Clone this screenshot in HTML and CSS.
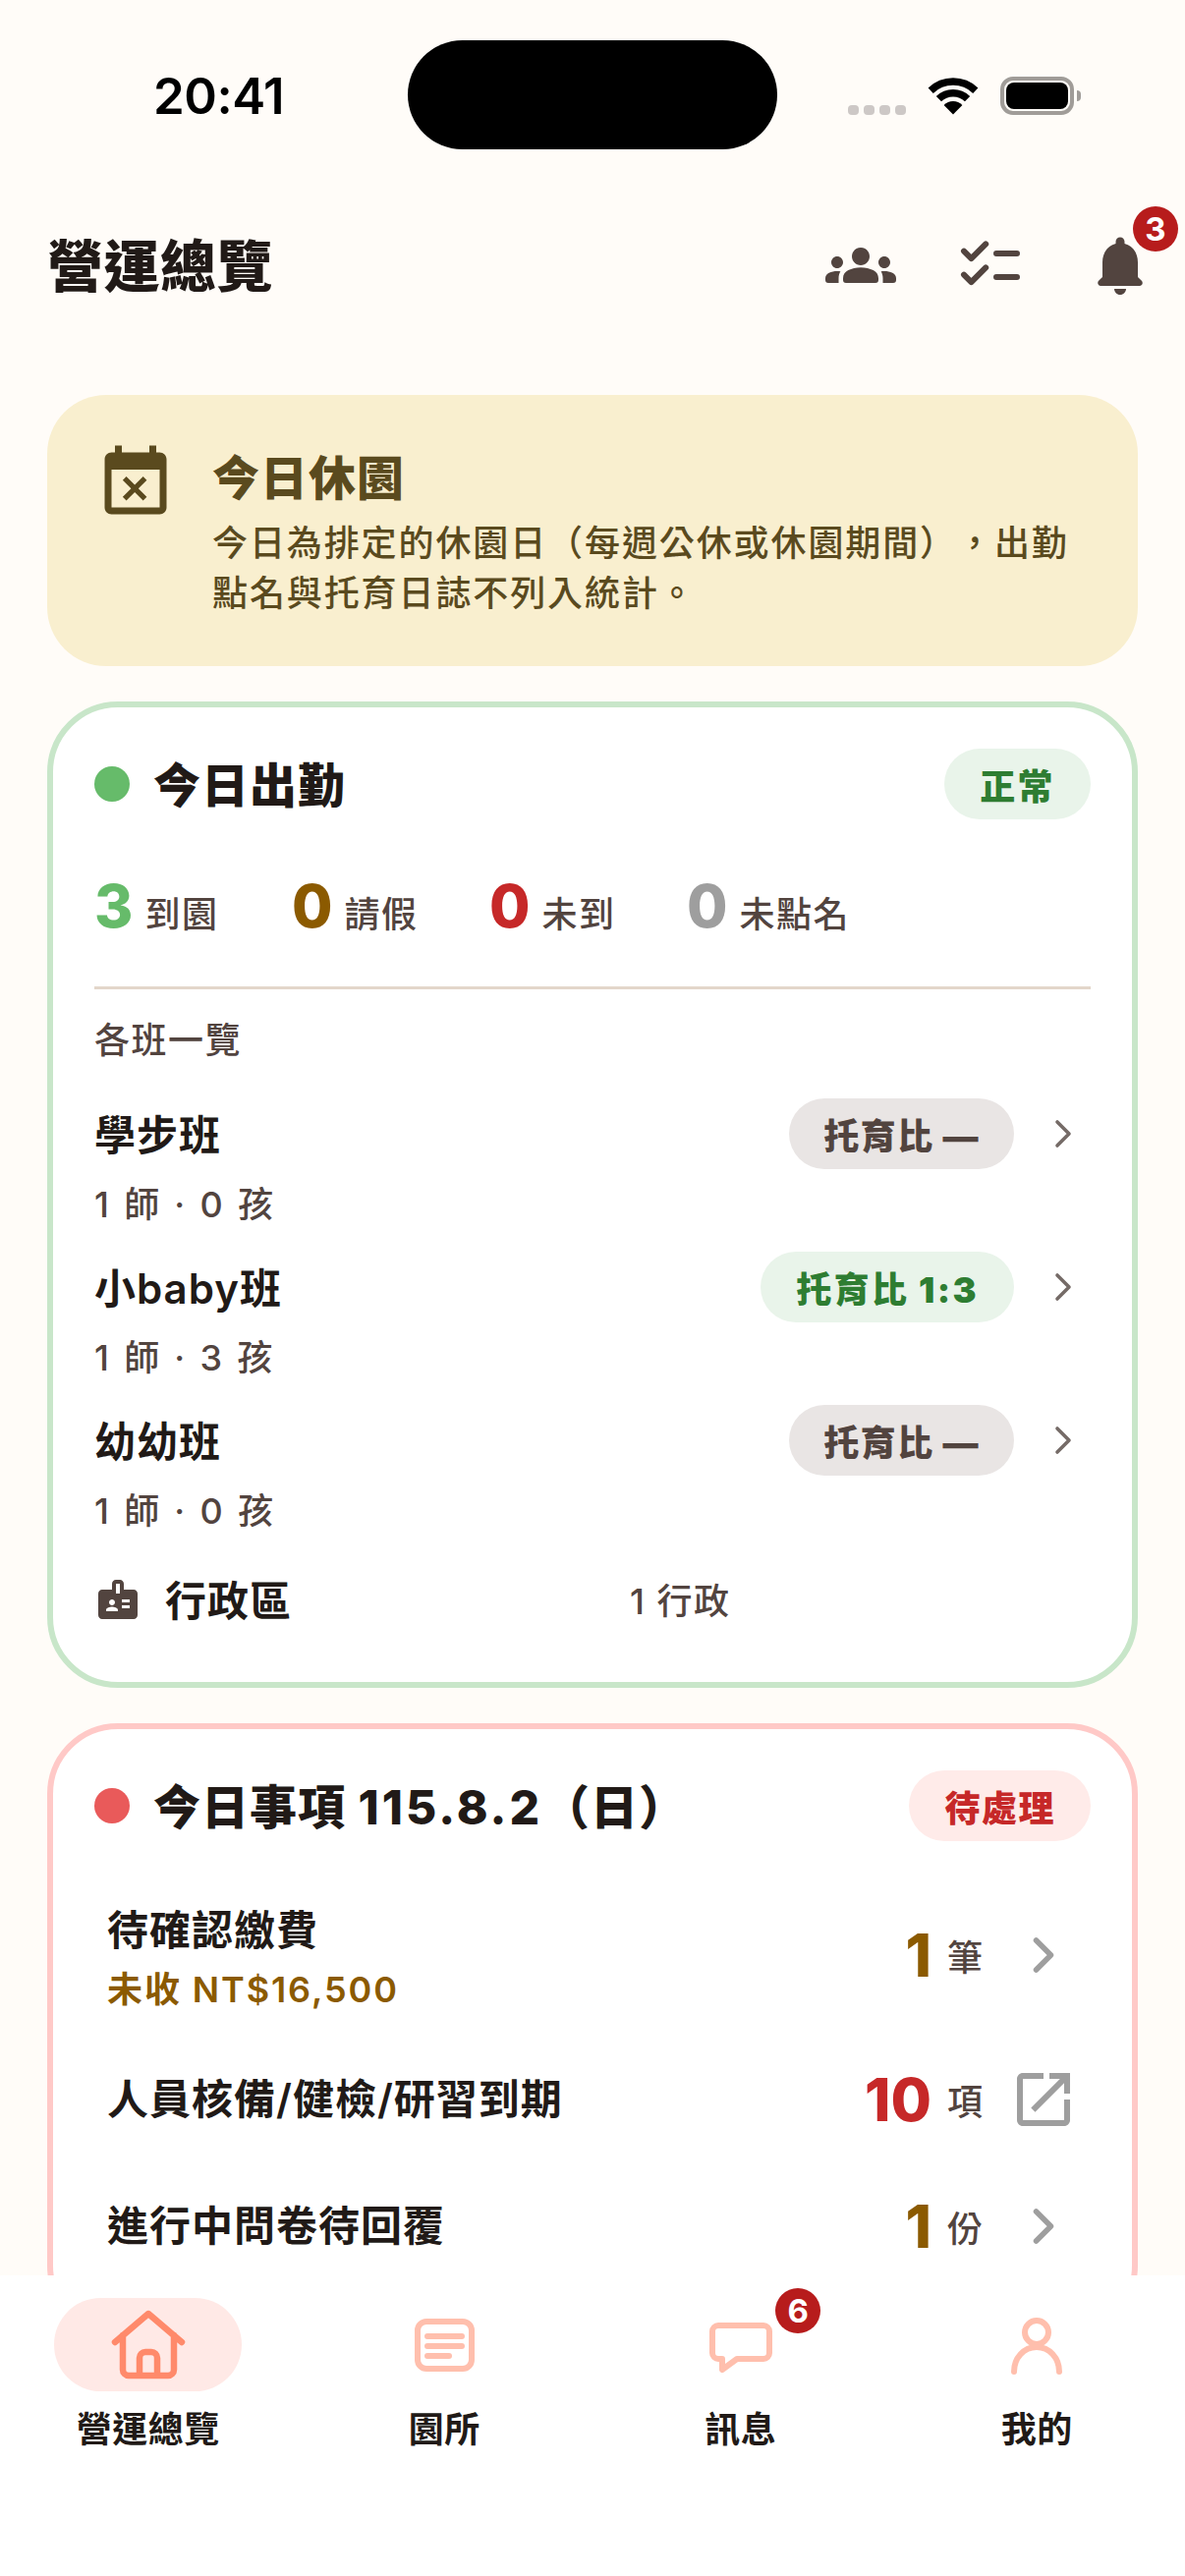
FILE: index.html
```html
<!DOCTYPE html>
<html lang="zh-Hant">

<head>
    <meta charset="UTF-8">
    <meta name="viewport" content="width=device-width, initial-scale=1.0">
    <title>營運總覽</title>
    <link rel="stylesheet" href="styles.css">
</head>

<body>
    <div class="page">
        <!-- 狀態列 -->
        <div class="status-bar">
            <span class="time">20:41</span>
            <div class="island"></div>
            <div class="status-right">
                <div class="signal"><i></i><i></i><i></i><i></i></div>
                <svg class="wifi" width="52" height="38" viewBox="0 0 52 38">
                    <path d="M3.2 13.2a33 33 0 0 1 45.6 0M11.4 21.6a21 21 0 0 1 29.2 0" fill="none" stroke="#000" stroke-width="7.5"/>
                    <path d="M26 37.5l-9.4-9.6a13.5 13.5 0 0 1 18.8 0z" fill="#000"/>
                </svg>
                <div class="battery"><div class="battery-fill"></div></div>
                <div class="battery-nub"></div>
            </div>
        </div>

        <!-- 標題列 -->
        <header class="top-bar">
            <h1>營運總覽</h1>
            <div class="top-icons">
                <svg class="top-icon" viewBox="0 0 24 24"><path d="M12 12.75c1.63 0 3.07.39 4.24.9 1.08.48 1.76 1.56 1.76 2.73V17a1 1 0 0 1-1 1H7a1 1 0 0 1-1-1v-.61c0-1.18.68-2.26 1.76-2.73 1.17-.52 2.61-.91 4.24-.91zM4 13c1.1 0 2-.9 2-2s-.9-2-2-2-2 .9-2 2 .9 2 2 2zm1.13 1.1C4.76 14.04 4.39 14 4 14c-.99 0-1.93.21-2.78.58C.48 14.9 0 15.62 0 16.43V17a1 1 0 0 0 1 1h3.5v-1.61c0-.83.23-1.61.63-2.29zM20 13c1.1 0 2-.9 2-2s-.9-2-2-2-2 .9-2 2 .9 2 2 2zm4 3.43c0-.81-.48-1.53-1.22-1.85-.85-.37-1.79-.58-2.78-.58-.39 0-.76.04-1.13.1.4.68.63 1.46.63 2.29V18H23a1 1 0 0 0 1-1v-.57zM12 6c1.66 0 3 1.34 3 3s-1.34 3-3 3-3-1.34-3-3 1.34-3 3-3z"/></svg>
                <svg class="top-icon" viewBox="0 0 24 24"><path class="check-line" d="M3 7.2l2.5 2.5 4.9-4.9M3 15.2l2.5 2.5 4.9-4.9M14 8h7M14 16h7"/></svg>
                <div class="bell-wrap">
                    <svg class="top-icon" viewBox="0 0 24 24"><path d="M12 22c1.1 0 2-.9 2-2h-4c0 1.1.9 2 2 2zm6-6v-5c0-3.07-1.63-5.64-4.5-6.32V4c0-.83-.67-1.5-1.5-1.5s-1.5.67-1.5 1.5v.68C7.64 5.36 6 7.92 6 11v5l-1.29 1.29c-.63.63-.19 1.71.7 1.71h13.17c.89 0 1.34-1.08.71-1.71L18 16z"/></svg>
                    <span class="badge bell-badge">3</span>
                </div>
            </div>
        </header>

        <main class="content">
            <!-- 休園提示 -->
            <section class="closed-banner">
                <svg class="closed-icon" viewBox="0 0 24 24"><path d="M9.31 17l2.44-2.44L14.19 17l1.06-1.06-2.44-2.44 2.44-2.44L14.19 10l-2.44 2.44L9.31 10l-1.06 1.06 2.44 2.44-2.44 2.44L9.31 17zM19 3h-1V1h-2v2H8V1H6v2H5c-1.11 0-1.99.9-1.99 2L3 19c0 1.1.89 2 2 2h14c1.1 0 2-.9 2-2V5c0-1.1-.9-2-2-2zm0 16H5V8h14v11z"/></svg>
                <div class="closed-text">
                    <h2>今日休園</h2>
                    <p>今日為排定的休園日（每週公休或休園期間），出勤點名與托育日誌不列入統計。</p>
                </div>
            </section>

            <!-- 今日出勤 -->
            <section class="card card-green">
                <div class="card-head">
                    <span class="dot dot-green"></span>
                    <h2>今日出勤</h2>
                    <span class="pill pill-green">正常</span>
                </div>
                <div class="stats">
                    <div class="stat"><b class="num green">3</b><span>到園</span></div>
                    <div class="stat"><b class="num amber">0</b><span>請假</span></div>
                    <div class="stat"><b class="num red">0</b><span>未到</span></div>
                    <div class="stat"><b class="num grey">0</b><span>未點名</span></div>
                </div>
                <div class="divider"></div>
                <div class="list-title">各班一覽</div>

                <div class="class-row">
                    <div class="class-top">
                        <span class="class-name">學步班</span>
                        <span class="pill pill-grey">托育比 —</span>
                        <svg class="chev" viewBox="0 0 24 24"><path d="M9 6l6 6-6 6"/></svg>
                    </div>
                    <div class="class-sub">1 師 · 0 孩</div>
                </div>
                <div class="class-row">
                    <div class="class-top">
                        <span class="class-name">小baby班</span>
                        <span class="pill pill-green">托育比 1:3</span>
                        <svg class="chev" viewBox="0 0 24 24"><path d="M9 6l6 6-6 6"/></svg>
                    </div>
                    <div class="class-sub">1 師 · 3 孩</div>
                </div>
                <div class="class-row">
                    <div class="class-top">
                        <span class="class-name">幼幼班</span>
                        <span class="pill pill-grey">托育比 —</span>
                        <svg class="chev" viewBox="0 0 24 24"><path d="M9 6l6 6-6 6"/></svg>
                    </div>
                    <div class="class-sub">1 師 · 0 孩</div>
                </div>

                <div class="admin-row">
                    <svg class="admin-icon" viewBox="0 0 24 24"><path d="M20 7h-5V4c0-1.1-.9-2-2-2h-2c-1.1 0-2 .9-2 2v3H4c-1.1 0-2 .9-2 2v11c0 1.1.9 2 2 2h16c1.1 0 2-.9 2-2V9c0-1.1-.9-2-2-2zM9 12c.83 0 1.5.67 1.5 1.5S9.83 15 9 15s-1.5-.67-1.5-1.5S8.17 12 9 12zm3 6H6v-.75c0-1 2-1.5 3-1.5s3 .5 3 1.5V18zm1-9h-2V4h2v5zm5 7.5h-4V15h4v1.5zm0-3h-4V12h4v1.5z"/></svg>
                    <span class="class-name">行政區</span>
                    <span class="admin-count">1 行政</span>
                </div>
            </section>

            <!-- 今日事項 -->
            <section class="card card-red">
                <div class="card-head">
                    <span class="dot dot-red"></span>
                    <h2>今日事項 <span class="date">115.8.2</span>（日）</h2>
                    <span class="pill pill-red">待處理</span>
                </div>
                <div class="todo-row todo-first">
                    <div class="todo-text">
                        <div class="todo-name">待確認繳費</div>
                        <div class="todo-note">未收 NT$16,500</div>
                    </div>
                    <div class="todo-count"><b class="num amber">1</b><span>筆</span></div>
                    <div class="todo-go"><svg class="chev-big" viewBox="0 0 24 24"><path d="M9 6l6 6-6 6"/></svg></div>
                </div>
                <div class="todo-row">
                    <div class="todo-text">
                        <div class="todo-name">人員核備/健檢/研習到期</div>
                    </div>
                    <div class="todo-count"><b class="num red">10</b><span>項</span></div>
                    <div class="todo-go"><svg class="open-icon" viewBox="0 0 24 24"><path d="M19 19H5V5h7V3H5c-1.11 0-2 .9-2 2v14c0 1.1.89 2 2 2h14c1.1 0 2-.9 2-2v-7h-2v7zM14 3v2h3.59l-9.83 9.83 1.41 1.41L19 6.41V10h2V3h-7z"/></svg></div>
                </div>
                <div class="todo-row">
                    <div class="todo-text">
                        <div class="todo-name">進行中問卷待回覆</div>
                    </div>
                    <div class="todo-count"><b class="num amber">1</b><span>份</span></div>
                    <div class="todo-go"><svg class="chev-big" viewBox="0 0 24 24"><path d="M9 6l6 6-6 6"/></svg></div>
                </div>
            </section>
        </main>

        <!-- 底部導覽 -->
        <nav class="tab-bar">
            <div class="tab">
                <div class="tab-icon tab-active">
                    <svg class="nav-svg nav-home" width="78" height="78" viewBox="0 0 78 78">
                        <path d="M5 36L39 7l34 29M13 29v35a6 6 0 0 0 6 6h40a6 6 0 0 0 6-6V29M30 70V52a6 6 0 0 1 6-6h6a6 6 0 0 1 6 6v18"/>
                    </svg>
                </div>
                <span class="tab-label">營運總覽</span>
            </div>
            <div class="tab">
                <div class="tab-icon">
                    <svg class="nav-svg" width="72" height="72" viewBox="0 0 72 72">
                        <rect x="9" y="12" width="55" height="48" rx="9"/>
                        <path d="M19 27h35M19 37h35M19 47h22"/>
                    </svg>
                </div>
                <span class="tab-label">園所</span>
            </div>
            <div class="tab">
                <div class="tab-icon">
                    <svg class="nav-svg" width="72" height="72" viewBox="0 0 72 72">
                        <path d="M13 16h46a6 6 0 0 1 6 6v22a6 6 0 0 1-6 6H32L17 61V50h-4a6 6 0 0 1-6-6V22a6 6 0 0 1 6-6z"/>
                    </svg>
                    <span class="badge chat-badge">6</span>
                </div>
                <span class="tab-label">訊息</span>
            </div>
            <div class="tab">
                <div class="tab-icon">
                    <svg class="nav-svg" width="72" height="72" viewBox="0 0 72 72">
                        <circle cx="36" cy="23" r="12"/>
                        <path d="M13 63c0-14 10-25 23-25s23 11 23 25"/>
                    </svg>
                </div>
                <span class="tab-label">我的</span>
            </div>
        </nav>
    </div>
</body>

</html>
```

FILE: styles.css
```css
/* 基本樣式設定 */
* {
    box-sizing: border-box;
}

body {
    margin: 0;
    background: #fffcf8;
    font-family: Inter, "Noto Sans CJK TC", sans-serif;
    color: #211a17;
    text-spacing-trim: space-all;
}

h1, h2, p {
    margin: 0;
}

.page {
    position: relative;
    width: 1206px;
    height: 2622px;
    display: flex;
    flex-direction: column;
    overflow: hidden;
}

/* 狀態列 */
.status-bar {
    height: 198px;
    flex: none;
    display: flex;
    justify-content: space-between;
    padding: 74px 106px 0 156px;
}

.time {
    font-size: 51px;
    line-height: 48px;
    font-weight: 600;
    color: #000;
    letter-spacing: -0.5px;
}

.island {
    position: absolute;
    left: 415px;
    top: 41px;
    width: 376px;
    height: 111px;
    border-radius: 56px;
    background: #000;
}

.status-right {
    display: flex;
    align-items: flex-end;
    height: 43px;
}

.signal {
    display: flex;
    gap: 5px;
    margin-right: 22px;
}

.signal i {
    width: 11px;
    height: 10px;
    border-radius: 4px;
    background: #cdc8c6;
}

.wifi {
    margin-right: 22px;
}

.battery {
    width: 75px;
    height: 39px;
    border: 4px solid #a09c98;
    border-radius: 13px;
    padding: 2px;
}

.battery-fill {
    height: 100%;
    border-radius: 8px;
    background: #000;
}

.battery-nub {
    width: 4px;
    height: 11px;
    margin: 0 0 14px 3px;
    border-radius: 0 4px 4px 0;
    background: #a09c98;
}

/* 標題列 */
.top-bar {
    height: 144px;
    flex: none;
    display: flex;
    align-items: center;
    justify-content: space-between;
    padding: 0 30px 0 48px;
}

.top-bar h1 {
    padding-bottom: 6px;
    font-size: 57px;
    font-weight: 900;
    letter-spacing: 0.5px;
}

.top-icons {
    display: flex;
    gap: 60px;
}

.top-icon {
    display: block;
    width: 72px;
    height: 72px;
    fill: #52443f;
}

.check-line {
    fill: none;
    stroke: #52443f;
    stroke-width: 2;
    stroke-linecap: round;
    stroke-linejoin: round;
}

.bell-wrap {
    position: relative;
}

.badge {
    position: absolute;
    width: 46px;
    height: 46px;
    border-radius: 50%;
    background: #b71c1c;
    color: #fff;
    font-size: 33px;
    font-weight: 700;
    line-height: 46px;
    text-align: center;
}

.bell-badge {
    left: 49px;
    top: -24px;
}

.chat-badge {
    left: 131px;
    top: -10px;
}

/* 內容區 */
.content {
    flex: 1;
    min-height: 0;
    overflow: hidden;
    padding: 60px 48px 0;
}

.closed-banner {
    height: 276px;
    display: flex;
    gap: 36px;
    padding: 48px;
    border-radius: 60px;
    background: #f9efcf;
    color: #5a4a1e;
}

.closed-icon {
    flex: none;
    width: 84px;
    height: 84px;
    fill: #5a4a1e;
}

.closed-text h2 {
    padding-top: 2px;
    font-size: 48px;
    line-height: 70px;
    font-weight: 900;
    letter-spacing: 1px;
}

.closed-text p {
    margin-top: 6px;
    font-size: 36px;
    line-height: 51px;
    font-weight: 500;
    letter-spacing: 1.9px;
}

.card {
    margin-top: 36px;
    padding: 42px 42px 42px;
    border: 6px solid;
    border-radius: 72px;
    background: #fff;
}

.card-green {
    height: 1004px;
    border-color: #c8e6c9;
}

.card-red {
    border-color: #ffc9c7;
}

.card-head {
    display: flex;
    align-items: center;
    height: 72px;
}

.card-head h2 {
    flex: 1;
    padding-bottom: 4px;
    font-size: 48px;
    font-weight: 900;
    letter-spacing: 1px;
}

.date {
    margin-left: 2px;
    font-weight: 800;
    letter-spacing: 3px;
}

.dot {
    width: 36px;
    height: 36px;
    margin-right: 24px;
    border-radius: 50%;
}

.dot-green {
    background: #66bb6a;
}

.dot-red {
    background: #e95a5a;
}

.pill {
    height: 72px;
    display: flex;
    align-items: center;
    padding: 0 36px;
    border-radius: 36px;
    font-size: 36px;
    font-weight: 900;
    letter-spacing: 1.5px;
}

.pill-green {
    background: #e9f4ea;
    color: #2e7d32;
    letter-spacing: 2.4px;
}

.pill-red {
    background: #ffebe9;
    color: #c62828;
}

.pill-grey {
    padding: 0 35px;
    background: #e9e5e4;
    color: #52443f;
}

/* 出勤統計 */
.stats {
    display: grid;
    grid-template-columns: repeat(4, 201px);
    margin-top: 52px;
}

.stat {
    display: flex;
    align-items: baseline;
    font-size: 36px;
    font-weight: 500;
    letter-spacing: 1.5px;
    color: #52443f;
}

.stat span {
    margin-left: 12px;
}

.num {
    font-size: 60px;
    line-height: 72px;
    font-weight: 800;
    letter-spacing: 0;
}

.green {
    color: #66bb6a;
}

.amber {
    color: #8b5a00;
}

.red {
    color: #c62828;
}

.grey {
    color: #9e9e9e;
}

.divider {
    height: 3px;
    margin-top: 46px;
    background: #e3d6ca;
}

.list-title {
    margin-top: 25px;
    font-size: 36px;
    line-height: 54px;
    font-weight: 500;
    letter-spacing: 1.5px;
    color: #52443f;
}

/* 班級列表 */
.class-row {
    height: 156px;
}

.list-title + .class-row {
    margin-top: 32px;
}

.class-top {
    display: flex;
    align-items: center;
    height: 72px;
}

.class-name {
    padding-bottom: 3px;
    font-size: 42px;
    font-weight: 600;
    letter-spacing: 1px;
}

.class-top .class-name {
    flex: 1;
}

.chev {
    width: 48px;
    height: 48px;
    margin: 0 4px 0 26px;
    fill: none;
    stroke: #756b67;
    stroke-width: 1.8;
    stroke-linecap: round;
    stroke-linejoin: round;
}

.class-sub {
    margin-top: 9px;
    font-size: 36px;
    line-height: 54px;
    font-weight: 500;
    letter-spacing: 2.8px;
    color: #52443f;
}

.admin-row {
    display: flex;
    align-items: center;
    height: 80px;
    margin-top: 2px;
}

.admin-icon {
    width: 48px;
    height: 48px;
    margin-right: 24px;
    fill: #52443f;
}

.admin-count {
    margin-left: 344px;
    padding-bottom: 2px;
    font-size: 36px;
    font-weight: 500;
    letter-spacing: 1.5px;
    color: #52443f;
}

/* 今日事項 */
.todo-row {
    display: flex;
    align-items: center;
    min-height: 129px;
    padding: 0 12px 0 13px;
}

.todo-first {
    min-height: 165px;
    margin-top: 33px;
}

.todo-first .todo-text {
    padding-top: 10px;
}

.todo-text {
    flex: 1;
}

.todo-name {
    font-size: 42px;
    line-height: 60px;
    font-weight: 600;
    letter-spacing: 1px;
}

.todo-note {
    font-size: 36px;
    line-height: 60px;
    font-weight: 600;
    letter-spacing: 1.9px;
    color: #8b5a00;
}

.todo-count {
    display: flex;
    align-items: center;
    font-size: 36px;
    font-weight: 500;
    color: #52443f;
}

.todo-count span {
    margin-left: 16px;
}

.todo-go {
    width: 72px;
    margin-left: 26px;
    display: flex;
    justify-content: center;
}

.chev-big {
    width: 60px;
    height: 60px;
    fill: none;
    stroke: #9e9e9e;
    stroke-width: 2.2;
    stroke-linecap: round;
    stroke-linejoin: round;
}

.open-icon {
    width: 72px;
    height: 72px;
    fill: #9e9e9e;
}

/* 底部導覽 */
.tab-bar {
    height: 306px;
    flex: none;
    display: grid;
    grid-template-columns: repeat(4, 1fr);
    padding-top: 23px;
    background: #fff;
}

.tab {
    display: flex;
    flex-direction: column;
    align-items: center;
}

.tab-icon {
    position: relative;
    width: 191px;
    height: 95px;
    display: flex;
    align-items: center;
    justify-content: center;
    border-radius: 48px;
}

.tab-active {
    background: #ffe9e6;
}

.nav-svg {
    fill: none;
    stroke: #ffbfad;
    stroke-width: 6;
    stroke-linecap: round;
    stroke-linejoin: round;
}

.nav-home {
    stroke: #ff8a6b;
    stroke-width: 6.5;
}

.tab-label {
    margin-top: 12px;
    font-size: 36px;
    line-height: 54px;
    font-weight: 700;
    letter-spacing: 0.5px;
}
```
